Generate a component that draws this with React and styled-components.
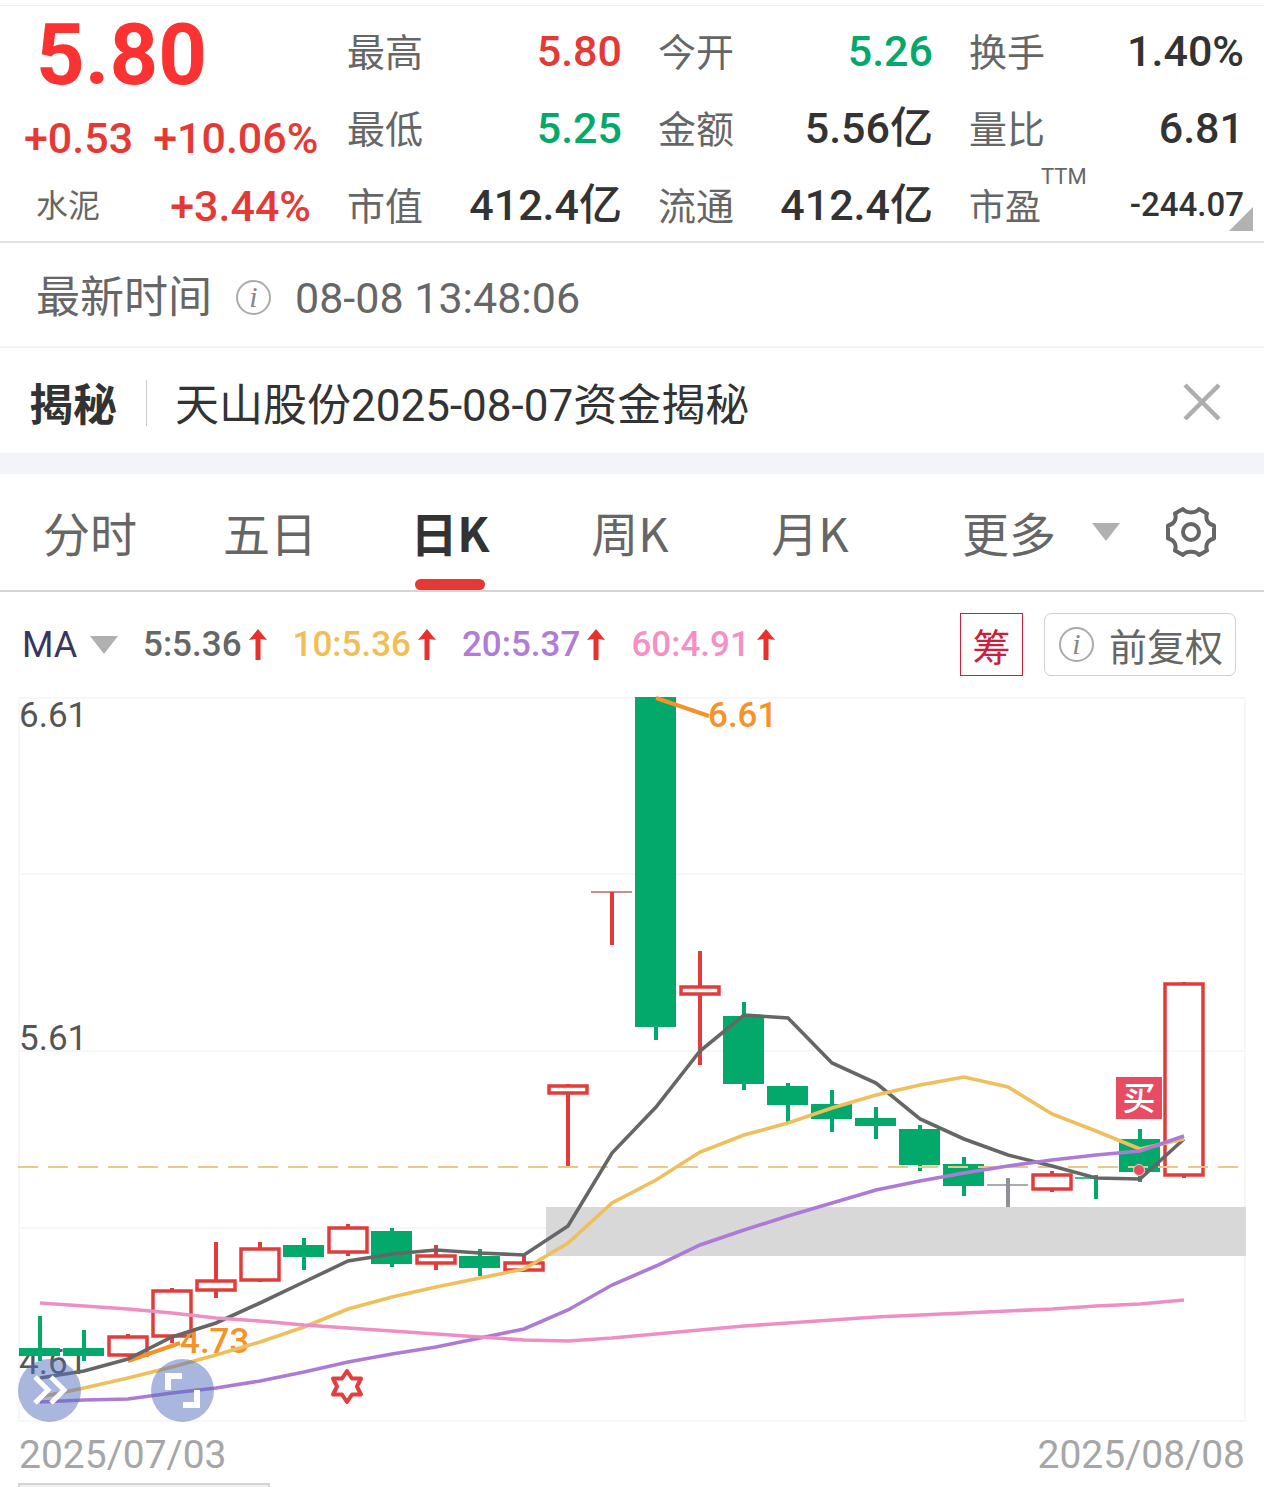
import React from "react";
import styled, { createGlobalStyle } from "styled-components";

const RED = "#e53935";
const GREEN = "#03a96b";
const DARK = "#333333";
const GREY = "#666666";
const CJK = `"Noto Sans CJK SC", "Noto Sans", sans-serif`;

const Global = createGlobalStyle`
  * { box-sizing: border-box; }
  body {
    margin: 0;
    background: #ffffff;
    color: ${DARK};
    font-family: Roboto, ${CJK};
  }
  button, select {
    font: inherit;
    color: inherit;
    background: none;
    border: 0;
    padding: 0;
    margin: 0;
    cursor: pointer;
  }
`;

const Page = styled.main`
  padding-top: 5px;
`;

const Quote = styled.section`
  position: relative;
  display: grid;
  grid-template-columns: 347px 1fr;
  padding: 10px 20px 1px 0;
  border-top: 1px solid #ececec;
  border-bottom: 2px solid #e2e2e2;
`;

const Summary = styled.div`
  display: flex;
  flex-direction: column;
  color: ${RED};
`;

const Price = styled.div`
  padding-left: 36px;
  font-size: 85px;
  line-height: 78px;
  font-weight: 700;
  color: #fa3232;
`;

const Change = styled.div`
  display: flex;
  gap: 20px;
  padding-left: 24px;
  font-size: 43px;
  line-height: 88px;
  font-weight: 500;
  white-space: nowrap;
`;

const Sector = styled.div`
  display: flex;
  justify-content: space-between;
  padding: 0 36px;
  font-size: 43px;
  line-height: 48px;
  font-weight: 500;
`;

const SectorName = styled.span`
  font-size: 32px;
  font-weight: 400;
  color: ${GREY};
`;

const Stats = styled.dl`
  margin: 0;
  display: grid;
  grid-template-columns: repeat(3, 1fr);
  gap: 7px 36px;
`;

const Stat = styled.div`
  display: flex;
  justify-content: space-between;
  height: 70px;
  line-height: 70px;
  white-space: nowrap;
`;

const StatLabel = styled.dt`
  position: relative;
  font-family: ${CJK};
  font-size: ${(p) => (p.$small ? 36 : 38)}px;
  line-height: 68px;
  font-weight: 400;
  color: ${GREY};
`;

const Superscript = styled.sup`
  position: absolute;
  left: 100%;
  top: -6px;
  font-family: Roboto, sans-serif;
  font-size: 22px;
  line-height: 26px;
`;

const StatValue = styled.dd`
  margin: 0;
  font-size: ${(p) => (p.$small ? 33 : 43)}px;
  font-weight: 500;
  color: ${(p) => p.$color || DARK};
`;

const Corner = styled.span`
  position: absolute;
  right: 11px;
  bottom: 10px;
  width: 24px;
  height: 24px;
  background: #b2b2b2;
  clip-path: polygon(100% 0, 100% 100%, 0 100%);
`;

const TimeRow = styled.section`
  display: flex;
  align-items: center;
  gap: 24px;
  height: 105px;
  padding: 6px 0 0 36px;
  border-bottom: 2px solid #f2f2f2;
  font-size: 44px;
  line-height: 64px;
  color: ${GREY};
`;

const Time = styled.time`
  font-size: 43px;
`;

const Info = styled.span`
  flex: none;
  width: 35px;
  height: 35px;
  border: 2px solid #aaaaaa;
  border-radius: 50%;
  font: italic 400 30px/29px "Liberation Serif", serif;
  text-align: center;
  color: #888888;
`;

const NewsRow = styled.section`
  display: flex;
  align-items: center;
  height: 105px;
  padding: 10px 43px 0 29px;
  font-size: 44px;
  line-height: 64px;
`;

const NewsTag = styled.strong`
  padding-right: 29px;
  font-weight: 700;
`;

const NewsLink = styled.a`
  flex: 1;
  padding-left: 29px;
  background: linear-gradient(#cccccc, #cccccc) left 0 top 6px / 1px 46px no-repeat;
  color: inherit;
  text-decoration: none;
`;

const IconButton = styled.button`
  display: flex;
`;

const Divider = styled.div`
  height: 21px;
  background: #f3f4f9;
`;

const Tabs = styled.nav`
  display: grid;
  grid-template-columns: repeat(5, 180fr) 250fr 114fr;
  height: 118px;
  border-bottom: 2px solid #d6d6d6;
  font-family: ${CJK};
  font-size: 47px;
  line-height: 68px;
  color: ${GREY};
`;

const Tab = styled.button`
  position: relative;
  font-weight: ${(p) => (p.$active ? 700 : 400)};
  color: ${(p) => (p.$active ? DARK : GREY)};

  &::after {
    content: "";
    position: absolute;
    left: calc(50% - 35px);
    bottom: 0;
    width: 70px;
    height: 11px;
    border-radius: 6px;
    background: ${(p) => (p.$active ? RED : "transparent")};
  }
`;

const More = styled.button`
  display: flex;
  align-items: center;
  gap: 36px;
  padding-left: 62px;
`;

const Settings = styled.button`
  display: flex;
  align-items: center;
  justify-content: center;
  padding-right: 32px;
`;

const Triangle = styled.span`
  border: 14px solid transparent;
  border-top: 18px solid #b0b0b0;
  border-bottom: 0;
`;

const Indicators = styled.section`
  display: flex;
  align-items: center;
  gap: 25px;
  height: 105px;
  padding: 0 28px 0 22px;
  font-size: 35px;
  line-height: 52px;
  font-weight: 500;
  white-space: nowrap;
`;

const Picker = styled.label`
  display: flex;
  align-items: center;
  gap: 12px;
`;

const PickerSelect = styled.select`
  appearance: none;
  width: 56px;
  font-size: 36px;
  font-weight: 400;
  color: #3a3560;
`;

const Average = styled.span`
  display: flex;
  align-items: center;
  gap: 6px;
  color: ${(p) => p.$color};
`;

const Actions = styled.div`
  display: flex;
  gap: 21px;
  margin-left: auto;
  font-family: ${CJK};
  font-size: 38px;
  font-weight: 400;
`;

const ChipButton = styled.button`
  width: 63px;
  height: 63px;
  border: 1px solid #c9203c;
  color: #c9203c;
`;

const AdjustButton = styled.button`
  display: flex;
  align-items: center;
  gap: 15px;
  height: 63px;
  padding: 0 12px 0 14px;
  border: 1px solid #cfcfcf;
  border-radius: 7px;
  color: ${GREY};
`;

const ChartArea = styled.section`
  position: relative;
`;

const ChartSvg = styled.svg`
  display: block;
  width: 100%;
  height: auto;
  overflow: visible;
  font-size: 35px;
`;

const FloatButton = styled.button`
  position: absolute;
  bottom: 0;
  left: ${(p) => p.$left}px;
  width: 63px;
  height: 63px;
  border-radius: 50%;
  background: rgba(83, 112, 190, 0.5);
`;

const Dates = styled.div`
  display: flex;
  justify-content: space-between;
  padding: 6px 19px 0;
  font-size: 39px;
  line-height: 55px;
  color: #a6a6a6;
`;

const NextPanel = styled.div`
  width: 252px;
  height: 4px;
  margin-left: 18px;
  border: 2px solid #d4d4d4;
  border-bottom: 0;
  background: #f0f0f0;
`;

const stats = [
  ["最高", "5.80", RED],
  ["今开", "5.26", GREEN],
  ["换手", "1.40%"],
  ["最低", "5.25", GREEN],
  ["金额", "5.56亿"],
  ["量比", "6.81"],
  ["市值", "412.4亿"],
  ["流通", "412.4亿"],
  ["市盈", "-244.07", DARK, "TTM"],
];

const tabs = ["分时", "五日", "日K", "周K", "月K"];

const averages = [
  ["5:5.36", "#666666"],
  ["10:5.36", "#f2bd55"],
  ["20:5.37", "#b07cd8"],
  ["60:4.91", "#f490c4"],
];

// kind, wick top, body top, body bottom, wick bottom
const candles = [
  ["down", 1316, 1348, 1356, 1361],
  ["down", 1330, 1348, 1356, 1361],
  ["up", 1334, 1335, 1357, 1357],
  ["up", 1288, 1289, 1338, 1343],
  ["up", 1242, 1279, 1292, 1298],
  ["up", 1242, 1247, 1282, 1282],
  ["down", 1238, 1245, 1257, 1270],
  ["up", 1224, 1226, 1254, 1256],
  ["down", 1228, 1231, 1264, 1267],
  ["up", 1245, 1254, 1265, 1270],
  ["down", 1249, 1256, 1268, 1276],
  ["up", 1256, 1261, 1272, 1272],
  ["up", 1084, 1084, 1095, 1167],
  ["flatUp", 892, 892, 892, 945],
  ["down", 697, 697, 1027, 1040],
  ["up", 951, 985, 996, 1065],
  ["down", 1002, 1016, 1084, 1090],
  ["down", 1083, 1086, 1105, 1124],
  ["down", 1090, 1104, 1119, 1132],
  ["down", 1107, 1118, 1126, 1139],
  ["down", 1125, 1129, 1165, 1171],
  ["down", 1157, 1164, 1186, 1196],
  ["flat", 1178, 1185, 1185, 1207],
  ["up", 1171, 1173, 1191, 1192],
  ["flatDown", 1175, 1178, 1178, 1199],
  ["down", 1129, 1139, 1172, 1182],
  ["up", 982, 982, 1177, 1178],
];

const ma5 = [1378, 1371, 1359, 1337, 1323, 1303, 1282, 1261, 1254, 1250, 1253, 1255, 1226, 1153, 1107, 1051, 1015, 1018, 1063, 1083, 1119, 1139, 1155, 1166, 1178, 1179, 1139];
const ma10 = [1397, 1388, 1378, 1367, 1355, 1342, 1327, 1309, 1297, 1287, 1278, 1269, 1243, 1203, 1180, 1152, 1135, 1123, 1108, 1095, 1085, 1077, 1087, 1114, 1131, 1149, 1139];
const ma20 = [1402, 1400, 1399, 1393, 1388, 1381, 1372, 1362, 1354, 1347, 1338, 1329, 1310, 1285, 1266, 1245, 1230, 1216, 1203, 1190, 1181, 1173, 1166, 1160, 1155, 1151, 1136];
const ma60 = [1303, 1306, 1309, 1313, 1318, 1321, 1325, 1328, 1331, 1334, 1337, 1340, 1341, 1338, 1334, 1330, 1326, 1323, 1320, 1317, 1315, 1313, 1311, 1309, 1306, 1304, 1300];

const cx = (i) => 40 + 44 * i;
const toPoints = (values) => values.map((y, i) => `${cx(i)},${y}`).join(" ");

function Candle({ index, data }) {
  const [kind, high, top, bottom, low] = data;
  const x = cx(index);
  if (kind === "up") {
    return (
      <g stroke="#e23c3a" strokeWidth="4" fill="none">
        <path d={`M${x} ${high}V${top + 2}M${x} ${bottom - 2}V${low}`} />
        <rect x={x - 19} y={top + 2} width="38" height={bottom - top - 4} strokeWidth="3.5" />
      </g>
    );
  }
  if (kind === "down") {
    return (
      <g fill={GREEN}>
        <rect x={x - 2} y={high} width="4" height={low - high} />
        <rect x={x - 21} y={top} width="41" height={bottom - top} />
      </g>
    );
  }
  const color = kind === "flat" ? "#8f9199" : kind === "flatUp" ? "#e53935" : GREEN;
  return (
    <g stroke={color}>
      <path d={`M${x - 21} ${top}H${x + 20}`} strokeWidth="1.5" stroke={kind === "flatUp" ? "#b86a6c" : color} />
      <path d={`M${x} ${high}V${low}`} strokeWidth="4" />
    </g>
  );
}

function Chart() {
  return (
    <ChartSvg viewBox="0 697 1264 725" role="img" aria-label="日K">
      <g stroke="#f7f7f7" strokeWidth="2" fill="none">
        <rect x="19" y="698" width="1226" height="723" />
        <path d="M18 874H1245M18 1051H1245M18 1228H1245" />
      </g>
      <rect x="546" y="1207" width="700" height="49" fill="#d8d8d8" />
      <g fill="#555555">
        <text x="19" y="727">6.61</text>
        <text x="19" y="1050">5.61</text>
        <text x="19" y="1374">4.61</text>
      </g>
      {candles.map((c, i) => (
        <Candle key={i} index={i} data={c} />
      ))}
      <path d="M18 1167H1240" stroke="#e9c98a" strokeWidth="2" strokeDasharray="20 10" />
      <g stroke="#f5922a" strokeWidth="4">
        <path d="M656 698L709 716M128 1361L180 1343" />
      </g>
      <g fill="#f5922a" fontWeight="500">
        <text x="708" y="727">6.61</text>
        <text x="180" y="1353">4.73</text>
      </g>
      <g fill="none" strokeWidth="3.6">
        <polyline points={toPoints(ma5)} stroke="#666666" />
        <polyline points={toPoints(ma10)} stroke="#efbf5c" />
        <polyline points={toPoints(ma20)} stroke="#ad7bd6" />
        <polyline points={toPoints(ma60)} stroke="#ee8fc4" />
      </g>
      <circle cx="1139" cy="1170" r="5.5" fill="#e84c62" stroke="#f7c6c2" strokeWidth="1" />
      <rect x="1116" y="1077" width="46" height="42" fill="#e84c62" />
      <text x="1139" y="1110" textAnchor="middle" fontSize="33" fontWeight="500" fill="#ffffff">买</text>
      <path
        d="M347 1371L352 1378.500L361 1378.500L357 1386.500L361 1394.500L352 1394.500L347 1402L342 1394.500L333 1394.500L337 1386.500L333 1378.500L342 1378.500Z"
        fill="none"
        stroke="#e53c3e"
        strokeWidth="4"
        strokeLinejoin="round"
      />
    </ChartSvg>
  );
}

function Arrow() {
  return (
    <svg width="20" height="32" viewBox="0 0 20 32" aria-hidden="true">
      <path d="M10 0L19 11L12.500 10V31H7.500V10L1 11Z" fill="#ea302d" />
    </svg>
  );
}

export default function App() {
  return (
    <Page>
      <Global />
      <Quote>
        <Summary>
          <Price>5.80</Price>
          <Change>
            <span>+0.53</span>
            <span>+10.06%</span>
          </Change>
          <Sector>
            <SectorName>水泥</SectorName>
            <span>+3.44%</span>
          </Sector>
        </Summary>
        <Stats>
          {stats.map(([label, value, color, sup]) => (
            <Stat key={label}>
              <StatLabel $small={!!sup}>
                {label}
                {sup && <Superscript>{sup}</Superscript>}
              </StatLabel>
              <StatValue $small={!!sup} $color={color}>{value}</StatValue>
            </Stat>
          ))}
        </Stats>
        <Corner />
      </Quote>

      <TimeRow>
        <span>最新时间</span>
        <Info>i</Info>
        <Time>08-08 13:48:06</Time>
      </TimeRow>

      <NewsRow>
        <NewsTag>揭秘</NewsTag>
        <NewsLink href="#news">天山股份2025-08-07资金揭秘</NewsLink>
        <IconButton aria-label="关闭">
          <svg width="38" height="46" viewBox="0 0 38 46">
            <path d="M2 2L36 36M36 2L2 36" stroke="#adadad" strokeWidth="4.500" fill="none" />
          </svg>
        </IconButton>
      </NewsRow>

      <Divider />

      <Tabs>
        {tabs.map((t) => (
          <Tab key={t} $active={t === "日K"}>{t}</Tab>
        ))}
        <More aria-haspopup="menu">
          更多
          <Triangle />
        </More>
        <Settings aria-label="设置">
          <svg width="52" height="52" viewBox="0 0 52 52" fill="none" stroke="#666666" strokeWidth="4" strokeLinejoin="round">
            <path d="M18 3C21 7.500 31 7.500 34 3L42 7.500C40 13 43 18.500 49 19.500V32.500C43 33.500 40 39 42 44.500L34 49C31 44.500 21 44.500 18 49L10 44.500C12 39 9 33.500 3 32.500V19.500C9 18.500 12 13 10 7.500Z" />
            <circle cx="26" cy="26" r="8" />
          </svg>
        </Settings>
      </Tabs>

      <Indicators>
        <Picker>
          <PickerSelect aria-label="指标" defaultValue="MA">
            <option>MA</option>
          </PickerSelect>
          <Triangle />
        </Picker>
        {averages.map(([text, color]) => (
          <Average key={text} $color={color}>
            {text}
            <Arrow />
          </Average>
        ))}
        <Actions>
          <ChipButton>筹</ChipButton>
          <AdjustButton>
            <Info>i</Info>
            前复权
          </AdjustButton>
        </Actions>
      </Indicators>

      <ChartArea>
        <Chart />
        <FloatButton $left={18} aria-label="展开">
          <svg width="63" height="63" viewBox="0 0 63 63" fill="none" stroke="#ffffff" strokeWidth="5">
            <path d="M17 18L30 31L17 44M33 18L46 31L33 44" />
          </svg>
        </FloatButton>
        <FloatButton $left={151} aria-label="全屏">
          <svg width="63" height="63" viewBox="0 0 63 63" fill="none" stroke="#ffffff" strokeWidth="6">
            <path d="M31 17H17V31M32 46H46V31" />
          </svg>
        </FloatButton>
      </ChartArea>

      <Dates>
        <time>2025/07/03</time>
        <time>2025/08/08</time>
      </Dates>
      <NextPanel />
    </Page>
  );
}
